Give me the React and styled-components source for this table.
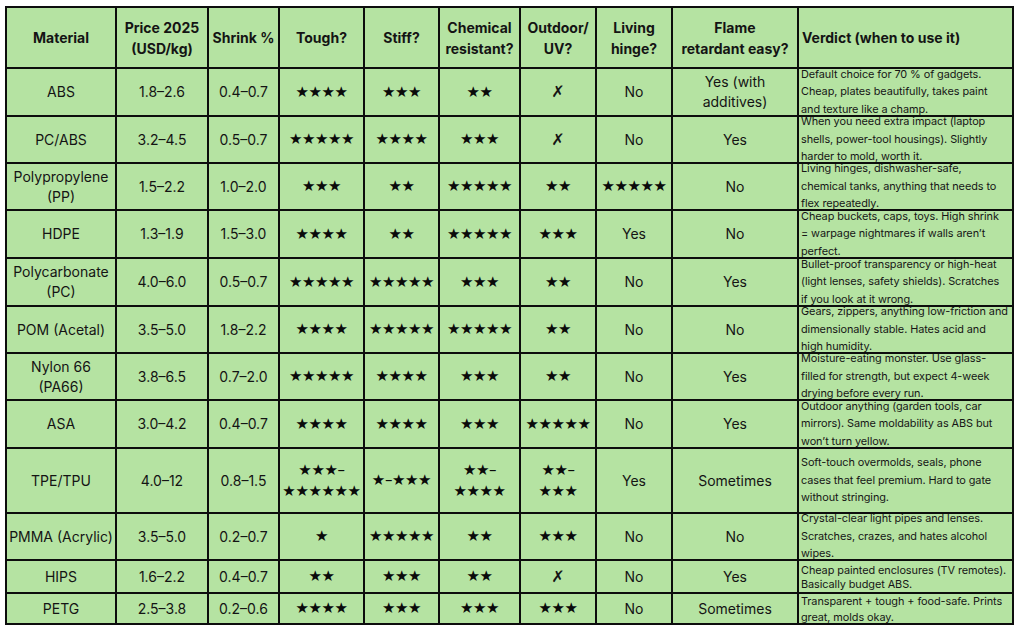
import styled, { createGlobalStyle } from 'styled-components';

const Global = createGlobalStyle`
	html, body {
		margin: 0;
		padding: 0;
		background: #ffffff;
	}
	body {
		font-family: Inter, "Noto Sans", sans-serif;
		color: #141414;
	}
`;

const COLS = [108, 90, 69, 83, 73, 79, 74, 74, 124, 213];
const ROWS = [59, 46, 45, 45, 46, 46, 45, 45, 46, 63, 45, 31, 29];

const Sheet = styled.div`
	margin: 6px 0 0 5px;
	width: max-content;
	display: grid;
	grid-template-columns: ${COLS.map(c => `${c}px`).join(' ')};
	grid-template-rows: ${ROWS.map(r => `${r}px`).join(' ')};
	gap: 2px;
	padding: 2px;
	background: #0d0d0d;
`;

const Cell = styled.div`
	background: #b5e3a2;
	display: flex;
	align-items: center;
	justify-content: center;
	text-align: center;
	white-space: pre;
	overflow: hidden;
	font-size: 14px;
	line-height: 20px;
`;

const Head = styled(Cell)`
	font-weight: 700;
	font-size: 14px;
	line-height: 21px;
	justify-content: ${p => (p.$left ? 'flex-start' : 'center')};
	padding-left: ${p => (p.$left ? '3px' : '0')};
`;

const Stars = styled(Cell)`
	font-family: "DejaVu Sans", sans-serif;
	font-size: 15px;
	letter-spacing: -0.4px;
	line-height: 21px;
	color: #0a0a0a;
`;

const Cross = styled(Cell)`
	font-family: "DejaVu Sans", sans-serif;
	font-size: 16px;
	font-weight: 700;
`;

const Verdict = styled(Cell)`
	justify-content: flex-start;
	text-align: left;
	padding-left: 2px;
	font-size: 10.9px;
	letter-spacing: -0.08px;
	line-height: ${p => p.$lh || 17.5}px;
	color: #161616;
`;

const headers = [
	'Material',
	'Price 2025\n(USD/kg)',
	'Shrink %',
	'Tough?',
	'Stiff?',
	'Chemical\nresistant?',
	'Outdoor/\nUV?',
	'Living\nhinge?',
	'Flame\nretardant easy?',
];

const data = [
	['ABS', '1.8–2.6', '0.4–0.7', '★★★★', '★★★', '★★', '✗', 'No', 'Yes (with\nadditives)', [
		'Default choice for 70 % of gadgets.',
		'Cheap, plates beautifully, takes paint',
		'and texture like a champ.',
	]],
	['PC/ABS', '3.2–4.5', '0.5–0.7', '★★★★★', '★★★★', '★★★', '✗', 'No', 'Yes', [
		'When you need extra impact (laptop',
		'shells, power-tool housings). Slightly',
		'harder to mold, worth it.',
	]],
	['Polypropylene\n(PP)', '1.5–2.2', '1.0–2.0', '★★★', '★★', '★★★★★', '★★', '★★★★★', 'No', [
		'Living hinges, dishwasher-safe,',
		'chemical tanks, anything that needs to',
		'flex repeatedly.',
	]],
	['HDPE', '1.3–1.9', '1.5–3.0', '★★★★', '★★', '★★★★★', '★★★', 'Yes', 'No', [
		'Cheap buckets, caps, toys. High shrink',
		'= warpage nightmares if walls aren’t',
		'perfect.',
	]],
	['Polycarbonate\n(PC)', '4.0–6.0', '0.5–0.7', '★★★★★', '★★★★★', '★★★', '★★', 'No', 'Yes', [
		'Bullet-proof transparency or high-heat',
		'(light lenses, safety shields). Scratches',
		'if you look at it wrong.',
	]],
	['POM (Acetal)', '3.5–5.0', '1.8–2.2', '★★★★', '★★★★★', '★★★★★', '★★', 'No', 'No', [
		'Gears, zippers, anything low-friction and',
		'dimensionally stable. Hates acid and',
		'high humidity.',
	]],
	['Nylon 66\n(PA66)', '3.8–6.5', '0.7–2.0', '★★★★★', '★★★★', '★★★', '★★', 'No', 'Yes', [
		'Moisture-eating monster. Use glass-',
		'filled for strength, but expect 4-week',
		'drying before every run.',
	]],
	['ASA', '3.0–4.2', '0.4–0.7', '★★★★', '★★★★', '★★★', '★★★★★', 'No', 'Yes', [
		'Outdoor anything (garden tools, car',
		'mirrors). Same moldability as ABS but',
		'won’t turn yellow.',
	]],
	['TPE/TPU', '4.0–12', '0.8–1.5', '★★★–\n★★★★★★', '★–★★★', '★★–\n★★★★', '★★–\n★★★', 'Yes', 'Sometimes', [
		'Soft-touch overmolds, seals, phone',
		'cases that feel premium. Hard to gate',
		'without stringing.',
	]],
	['PMMA (Acrylic)', '3.5–5.0', '0.2–0.7', '★', '★★★★★', '★★', '★★★', 'No', 'No', [
		'Crystal-clear light pipes and lenses.',
		'Scratches, crazes, and hates alcohol',
		'wipes.',
	]],
	['HIPS', '1.6–2.2', '0.4–0.7', '★★', '★★★', '★★', '✗', 'No', 'Yes', [
		'Cheap painted enclosures (TV remotes).',
		'Basically budget ABS.',
	], 14],
	['PETG', '2.5–3.8', '0.2–0.6', '★★★★', '★★★', '★★★', '★★★', 'No', 'Sometimes', [
		'Transparent + tough + food-safe. Prints',
		'great, molds okay.',
	], 16],
];

const renderCell = (v, key) => {
	if (v === '✗') return <Cross key={key}>{v}</Cross>;
	if (v.includes('★')) return <Stars key={key}>{v}</Stars>;
	return <Cell key={key}>{v}</Cell>;
};

export default function App() {
	return (
		<>
			<Global />
			<Sheet>
				{headers.map(h => (
					<Head key={h}>{h}</Head>
				))}
				<Head $left>Verdict (when to use it)</Head>
				{data.map(row => {
					const verdict = row[9];
					const lh = row[10];
					return [
						...row.slice(0, 9).map((v, i) => renderCell(v, row[0] + i)),
						<Verdict key={row[0] + 'v'} $lh={lh}>
							{verdict.join('\n')}
						</Verdict>,
					];
				})}
			</Sheet>
		</>
	);
}
